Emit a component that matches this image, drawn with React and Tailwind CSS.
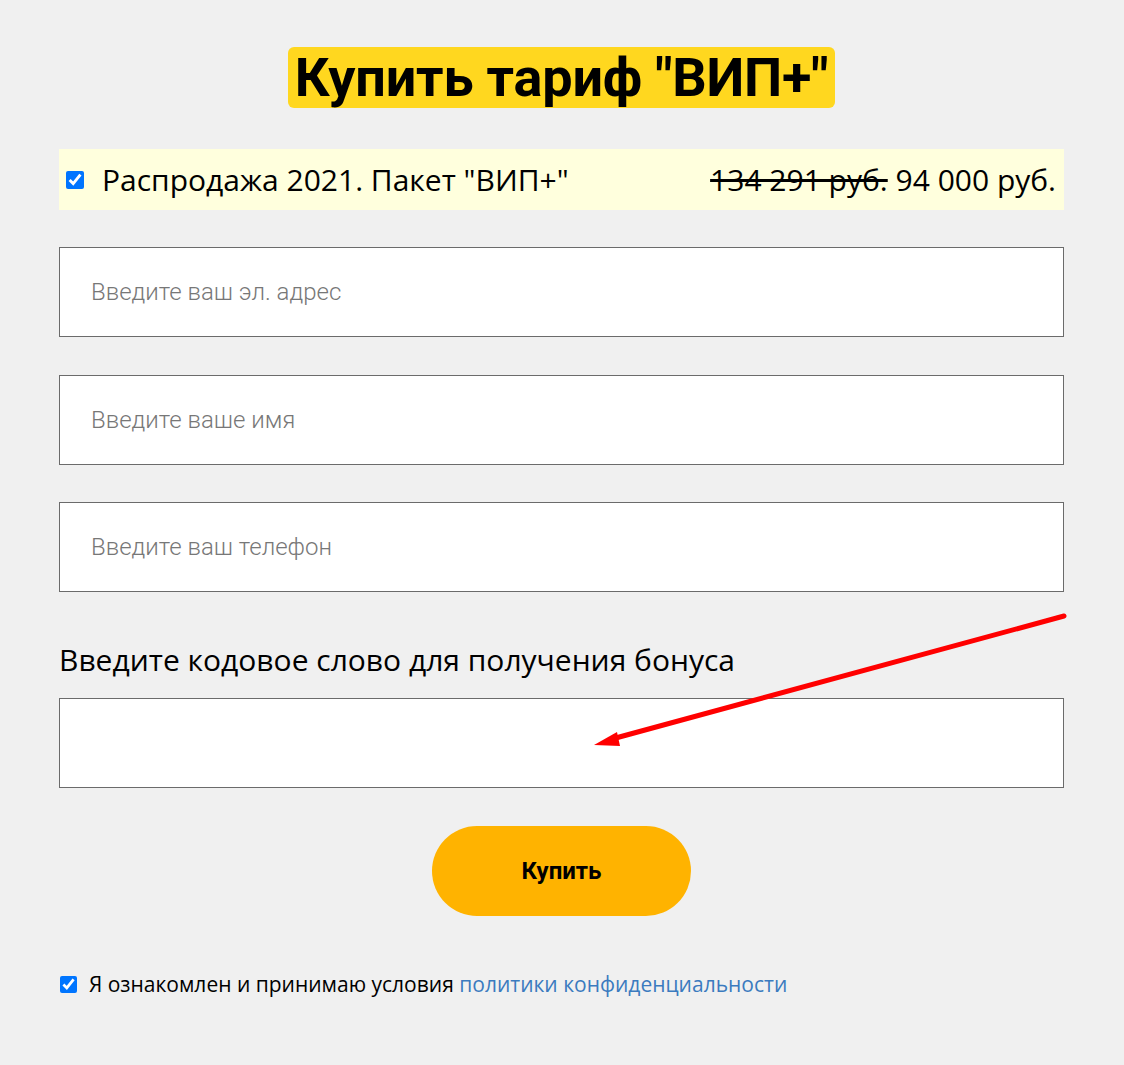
import { useState } from 'react'

const FIELDS = ['Введите ваш эл. адрес', 'Введите ваше имя', 'Введите ваш телефон']

export default function App() {
  const [agree, setAgree] = useState(true)
  const [pack, setPack] = useState(true)

  return (
    <div className="relative min-h-[1065px] w-full bg-[#f0f0f0] font-['Open_Sans',sans-serif] text-black">
      <div className="flex flex-col pl-[59px] pr-[60px] pt-[47px]">
        {/* Title */}
        <div className="flex justify-center">
          <h1 className="rounded-[6px] bg-[#ffd71f] px-[7px] font-['Roboto',sans-serif] text-[54px] font-bold leading-[61px] tracking-[-0.2px]">
            Купить тариф "ВИП+"
          </h1>
        </div>

        {/* Package row */}
        <div className="mt-[41px] flex h-[61px] items-center bg-[#ffffdd] pl-[7px] pr-[8px]">
          <input
            type="checkbox"
            checked={pack}
            onChange={() => setPack(!pack)}
            className="m-0 h-[18px] w-[18px] accent-[#0075ff]"
          />
          <span className="ml-[18px] text-[30px] leading-none">Распродажа 2021. Пакет "ВИП+"</span>
          <span className="ml-auto text-[30px] leading-none">
            <span className="line-through decoration-[3px]">134 291 руб.</span> 94 000 руб.
          </span>
        </div>

        {/* Inputs */}
        <div className="mt-[37px] flex flex-col gap-[37.5px]">
          {FIELDS.map((p) => (
            <input
              key={p}
              placeholder={p}
              className="h-[90px] w-full border border-[#6b6b6b] bg-white px-[31px] font-['Roboto',sans-serif] text-[24px] font-light text-black outline-none placeholder:text-[#777]"
            />
          ))}
        </div>

        <label className="mt-[49px] text-[30px] leading-[38px]">Введите кодовое слово для получения бонуса</label>
        <input className="mt-[19px] h-[90px] w-full border border-[#6b6b6b] bg-white px-[31px] text-[22px] outline-none" />

        {/* Buy button */}
        <div className="mt-[38px] flex justify-center">
          <button className="h-[90px] w-[259px] rounded-full bg-[#ffb300] font-['Roboto',sans-serif] text-[24px] font-bold">
            Купить
          </button>
        </div>

        {/* Agreement */}
        <div className="mt-[58px] flex items-center">
          <input
            type="checkbox"
            checked={agree}
            onChange={() => setAgree(!agree)}
            className="m-0 ml-px h-[17px] w-[17px] accent-[#0075ff]"
          />
          <span className="ml-[12px] text-[21px] leading-none">
            Я ознакомлен и принимаю условия{' '}
            <a href="#" className="text-[#3b7bbf]">политики конфиденциальности</a>
          </span>
        </div>
      </div>

      {/* Red arrow annotation */}
      <svg className="pointer-events-none absolute left-0 top-0" width="1124" height="1065">
        <line x1="1064" y1="616" x2="612" y2="739" stroke="#ff0000" strokeWidth="5" strokeLinecap="round" />
        <polygon points="594,745 617,732 620,746" fill="#ff0000" />
      </svg>
    </div>
  )
}
